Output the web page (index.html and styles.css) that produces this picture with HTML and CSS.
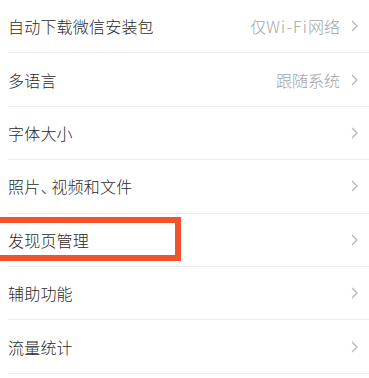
FILE: index.html
```html
<!DOCTYPE html>
<html lang="zh-CN">
<head>
<meta charset="utf-8">
<link rel="stylesheet" href="styles.css">
</head>
<body>
<div class="page">
  <ul class="list">
    <li class="row"><span class="label">自动下载微信安装包</span><span class="value">仅<span class="latin">Wi-Fi</span>网络</span><svg class="chev" viewBox="0 0 7 12"><polyline points="1,1 6,6 1,11"/></svg></li>
    <li class="row"><span class="label">多语言</span><span class="value">跟随系统</span><svg class="chev" viewBox="0 0 7 12"><polyline points="1,1 6,6 1,11"/></svg></li>
    <li class="row"><span class="label">字体大小</span><svg class="chev" viewBox="0 0 7 12"><polyline points="1,1 6,6 1,11"/></svg></li>
    <li class="row"><span class="label">照片<span class="comma">、</span>视频和文件</span><svg class="chev" viewBox="0 0 7 12"><polyline points="1,1 6,6 1,11"/></svg></li>
    <li class="row"><span class="label">发现页管理</span><svg class="chev" viewBox="0 0 7 12"><polyline points="1,1 6,6 1,11"/></svg></li>
    <li class="row"><span class="label">辅助功能</span><svg class="chev" viewBox="0 0 7 12"><polyline points="1,1 6,6 1,11"/></svg></li>
    <li class="row"><span class="label">流量统计</span><svg class="chev" viewBox="0 0 7 12"><polyline points="1,1 6,6 1,11"/></svg></li>
  </ul>
  <div class="highlight"></div>
</div>
</body>
</html>
```
FILE: styles.css
```css
html, body {
  margin: 0;
  padding: 0;
  background: #ffffff;
}
.page {
  position: relative;
  width: 369px;
  height: 378px;
  overflow: hidden;
  font-family: "Noto Sans CJK SC", "Noto Sans", sans-serif;
  font-weight: 300;
}
.list {
  list-style: none;
  margin: 0;
  padding: 0 0 0 8px;
}
.row {
  display: flex;
  align-items: center;
  height: 53.4px;
  box-sizing: border-box;
  border-bottom: 1px solid #ececec;
  padding-right: 11px;
}
.label {
  flex: 1;
  font-size: 16px;
  color: #2a2a2a;
  letter-spacing: 0.2px;
}
.comma {
  letter-spacing: -5px;
  margin-right: 0;
}
.value {
  font-size: 16px;
  color: #a4a4a4;
  margin-right: 11px;
}
.latin {
  letter-spacing: 1.2px;
}
.chev {
  width: 7px;
  height: 12px;
  fill: none;
  stroke: #b4b4b4;
  stroke-width: 1.2;
}
.highlight {
  position: absolute;
  left: -10px;
  top: 217px;
  width: 179px;
  height: 32px;
  border: 6px solid #f2532f;
}
```
